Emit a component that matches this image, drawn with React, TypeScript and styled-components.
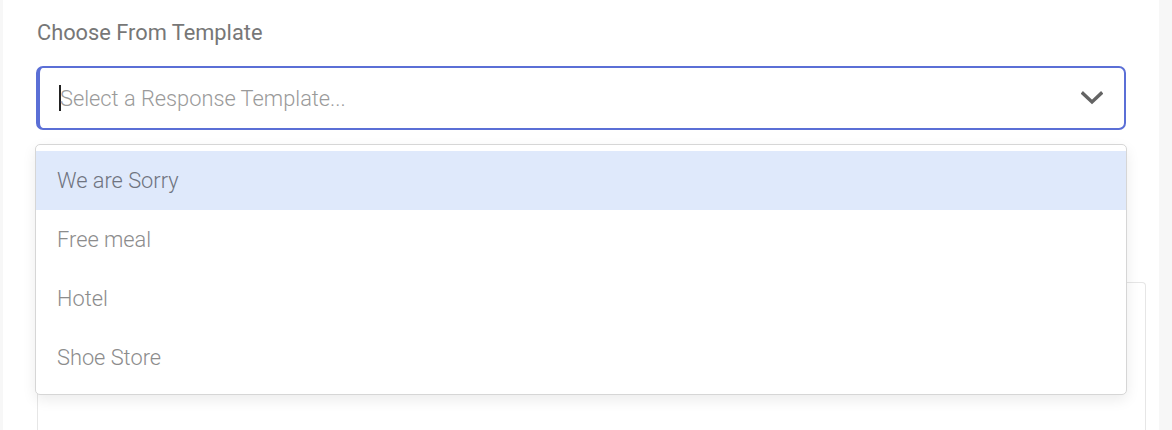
import React from "react";
import styled, { createGlobalStyle } from "styled-components";

const Global = createGlobalStyle`
  html, body { margin: 0; padding: 0; }
  body {
    background: #f7f7f7;
    font-family: Roboto, "Liberation Sans", Arial, sans-serif;
    overflow: hidden;
  }
`;

const Page = styled.div`
  height: 430px;
  padding-left: 3px;
  padding-right: 13px;
  display: flex;
`;

const Panel = styled.section`
  flex: 1;
  background: #ffffff;
  padding: 20px 13px 0 33px;
  display: flex;
  flex-direction: column;
`;

const Label = styled.div`
  font-size: 21.8px;
  color: #777777;
  margin-left: 1px;
  line-height: 26px;
  height: 26px;
`;

const Field = styled.div`
  position: relative;
  width: 1090px;
  margin-top: 20px;
`;

const SelectBox = styled.div`
  box-sizing: border-box;
  height: 64px;
  border: 2px solid #5b6fd6;
  border-left-width: 4px;
  border-radius: 7px;
  display: flex;
  align-items: center;
  padding: 0 21px 0 19px;
`;

const Caret = styled.span`
  width: 2px;
  height: 26px;
  background: #222;
  margin-right: -1px;
`;

const Placeholder = styled.span`
  flex: 1;
  font-size: 21.8px;
  font-weight: 300;
  color: #9a9a9a;
`;

const Menu = styled.ul`
  position: absolute;
  top: 78px;
  left: -1px;
  width: 1092px;
  box-sizing: border-box;
  margin: 0;
  padding: 6px 0 7px;
  list-style: none;
  background: #fff;
  border: 1px solid #d6d6d6;
  border-radius: 5px;
  box-shadow: 0 5px 14px rgba(0, 0, 0, 0.08);
  z-index: 2;
`;

const Item = styled.li<{ $active?: boolean }>`
  height: 59px;
  display: flex;
  align-items: center;
  padding-left: 21px;
  font-size: 21.8px;
  font-weight: 300;
  color: ${(p) => (p.$active ? "#6f7480" : "#8c8c8c")};
  background: ${(p) => (p.$active ? "#dfe9fb" : "transparent")};
`;

const LowerBox = styled.div`
  margin-top: 152px;
  margin-left: 1px;
  flex: 1;
  border: 1px solid #e6e6e6;
  border-bottom: none;
  border-radius: 4px 4px 0 0;
`;

const Chevron = () => (
  <svg width="22" height="14" viewBox="0 0 22 14" fill="none">
    <path d="M2 2.5 L11 11 L20 2.5" stroke="#646464" strokeWidth="3.4" strokeLinecap="square" strokeLinejoin="miter" />
  </svg>
);

const items = ["We are Sorry", "Free meal", "Hotel", "Shoe Store"];

export default function App() {
  return (
    <>
      <Global />
      <Page>
        <Panel>
          <Label>Choose From Template</Label>
          <Field>
            <SelectBox>
              <Caret />
              <Placeholder>Select a Response Template...</Placeholder>
              <Chevron />
            </SelectBox>
            <Menu>
              {items.map((t, i) => (
                <Item key={t} $active={i === 0}>
                  {t}
                </Item>
              ))}
            </Menu>
          </Field>
          <LowerBox />
        </Panel>
      </Page>
    </>
  );
}
